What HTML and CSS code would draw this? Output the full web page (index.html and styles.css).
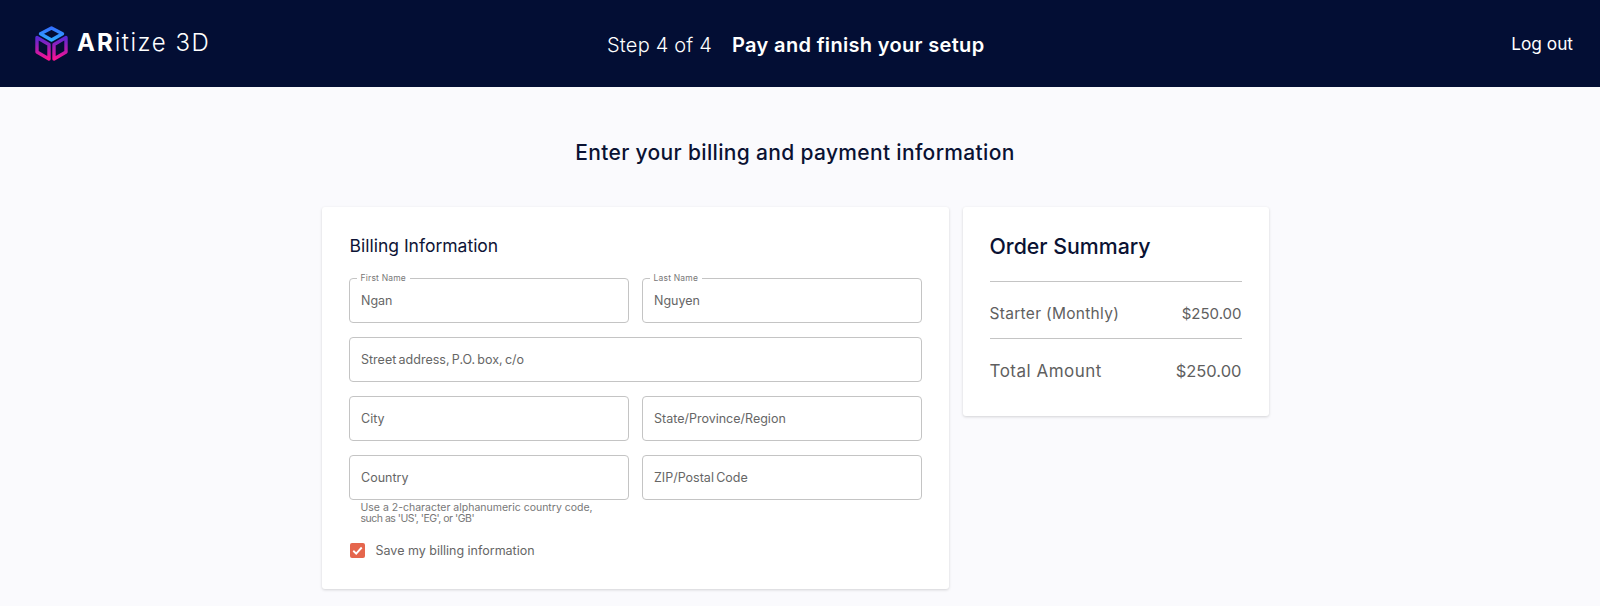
FILE: index.html
```html
<!DOCTYPE html>
<html lang="en">
<head>
<meta charset="utf-8">
<title>ARitize 3D - Pay and finish your setup</title>
<link rel="stylesheet" href="styles.css">
</head>
<body>
<header class="topbar">
  <div class="brand">
    <svg class="brand-icon" viewBox="0 0 33 35" fill="none" stroke-width="3.400" stroke-linejoin="round">
      <defs>
        <linearGradient id="g1" gradientUnits="userSpaceOnUse" x1="0" y1="0" x2="0" y2="15"><stop offset="0" stop-color="#3468ff"/><stop offset="1" stop-color="#2fb0ff"/></linearGradient>
        <linearGradient id="g2" gradientUnits="userSpaceOnUse" x1="0" y1="10" x2="0" y2="34"><stop offset="0" stop-color="#4f2ad8"/><stop offset="1" stop-color="#ff1090"/></linearGradient>
      </defs>
      <path d="M16.500 2 L27.500 7.800 L16.500 14 L5.500 7.800 Z" stroke="url(#g1)"/>
      <path d="M2 11.500 L14 18.500 V33 L2 26 Z" stroke="url(#g2)"/>
      <path d="M31 11.500 L19 18.500 V33 L31 26 Z" stroke="url(#g2)"/>
    </svg>
    <span class="brand-name"><b>AR</b>itize 3D</span>
  </div>
  <div class="steps"><span class="step-count">Step 4 of 4</span><span class="step-title">Pay and finish your setup</span></div>
  <a class="logout">Log out</a>
</header>
<main class="page">
  <h1 class="page-title">Enter your billing and payment information</h1>
  <div class="columns">
    <section class="card billing">
      <h2 class="billing-title">Billing Information</h2>
      <div class="form-grid">
        <div class="field"><span class="float-label">First Name</span><span class="value">Ngan</span></div>
        <div class="field"><span class="float-label">Last Name</span><span class="value">Nguyen</span></div>
        <div class="field wide"><span class="placeholder">Street address, P.O. box, c/o</span></div>
        <div class="field"><span class="placeholder">City</span></div>
        <div class="field"><span class="placeholder">State/Province/Region</span></div>
        <div class="field-wrap">
          <div class="field"><span class="placeholder">Country</span></div>
          <p class="hint">Use a 2-character alphanumeric country code,<br><span class="hint-codes">such as 'US', 'EG', or 'GB'</span></p>
        </div>
        <div class="field"><span class="placeholder">ZIP/Postal Code</span></div>
      </div>
      <div class="save">
        <span class="checkbox"><svg viewBox="0 0 16 16" fill="none"><path d="M3.500 8.300 L6.600 11.300 L12.500 4.800" stroke="#fff" stroke-width="2"/></svg></span>
        <span class="save-label">Save my billing information</span>
      </div>
    </section>
    <aside class="card summary">
      <h2 class="summary-title">Order Summary</h2>
      <div class="line first"><span class="line-label">Starter (Monthly)</span><span>$250.00</span></div>
      <div class="line total"><span class="line-label">Total Amount</span><span>$250.00</span></div>
    </aside>
  </div>
</main>
</body>
</html>
```

FILE: styles.css
```css
* { box-sizing: border-box; }
html, body { margin: 0; height: 100%; }
body {
  background: #fafafd;
  font-family: "Inter", "Liberation Sans", sans-serif;
  color: #5f5f5f;
  overflow: hidden;
}
.topbar {
  height: 87px;
  background: #030e34;
  color: #fff;
  display: grid;
  grid-template-columns: 572px auto 1fr;
  align-items: center;
  padding: 0 27px 0 35px;
}
.brand { display: flex; align-items: center; gap: 9px; margin-top: -1px; }
.brand-icon { width: 33px; height: 35px; display: block; }
.brand-name { font-size: 24px; font-weight: 300; letter-spacing: 1.500px; margin-top: -2px; }
.brand-name b { font-weight: 700; letter-spacing: 2px; }
.steps { display: flex; gap: 20px; align-items: baseline; font-size: 20px; margin-top: 2px; }
.step-count { font-weight: 300; letter-spacing: 0.200px; }
.step-title { font-weight: 600; letter-spacing: 0.330px; }
.logout { justify-self: end; font-size: 17.300px; font-weight: 400; }
.page { width: 1590px; padding-top: 53px; }
.page-title {
  margin: 0;
  text-align: center;
  font-size: 21px;
  line-height: 26px;
  font-weight: 500;
  letter-spacing: 0.330px;
  color: #0a1233;
}
.columns {
  display: flex;
  justify-content: center;
  align-items: flex-start;
  gap: 14px;
  margin-top: 41px;
}
.card {
  background: #fff;
  border-radius: 3px;
  box-shadow: 0 1px 3px rgba(0, 0, 0, 0.16);
}
.billing { width: 627px; height: 382px; padding: 27px 27px 0; }
.billing-title {
  margin: 0 0 20px 1px;
  font-size: 17.500px;
  line-height: 24px;
  font-weight: 400;
  color: #0e1436;
}
.form-grid {
  display: grid;
  grid-template-columns: 280px 280px;
  column-gap: 13px;
  row-gap: 14px;
}
.wide { grid-column: 1 / 3; }
.field {
  position: relative;
  height: 45px;
  border: 1px solid #c4c4c4;
  border-radius: 4px;
  padding: 0 11.500px;
  display: flex;
  align-items: center;
  font-size: 12.500px;
  color: #666;
}
.placeholder { word-spacing: -1.200px; }
.float-label {
  position: absolute;
  top: -6px;
  left: 7px;
  padding: 0 4px;
  background: #fff;
  font-size: 8.500px;
  line-height: 10px;
  letter-spacing: 0.200px;
  color: #777;
}
.hint {
  margin: 2px 0 0;
  padding-left: 12px;
  font-size: 10.500px;
  line-height: 11px;
  color: #777;
}
.hint-codes { letter-spacing: -0.500px; }
.save { display: flex; align-items: center; gap: 11px; margin: 19px 0 0 1px; }
.checkbox {
  width: 15px;
  height: 15px;
  background: #e5664d;
  border-radius: 2px;
  display: block;
}
.checkbox svg { display: block; width: 15px; height: 15px; }
.save-label { font-size: 12.500px; color: #666; }
.summary { width: 306px; height: 209px; padding: 26px 27px 0; }
.summary-title {
  margin: 0 0 21px;
  font-size: 21.300px;
  line-height: 27px;
  font-weight: 500;
  color: #0a1233;
}
.line {
  display: flex;
  justify-content: space-between;
  border-top: 1px solid #c4c4c4;
  align-items: center;
  height: 57px;
  padding-top: 6px;
  font-size: 15px;
}
.line-label { font-size: 15.500px; letter-spacing: 0.300px; }
.line.total { font-size: 16.500px; padding-top: 7px; }
.line.total .line-label { font-size: 17px; letter-spacing: 0.500px; }
```
